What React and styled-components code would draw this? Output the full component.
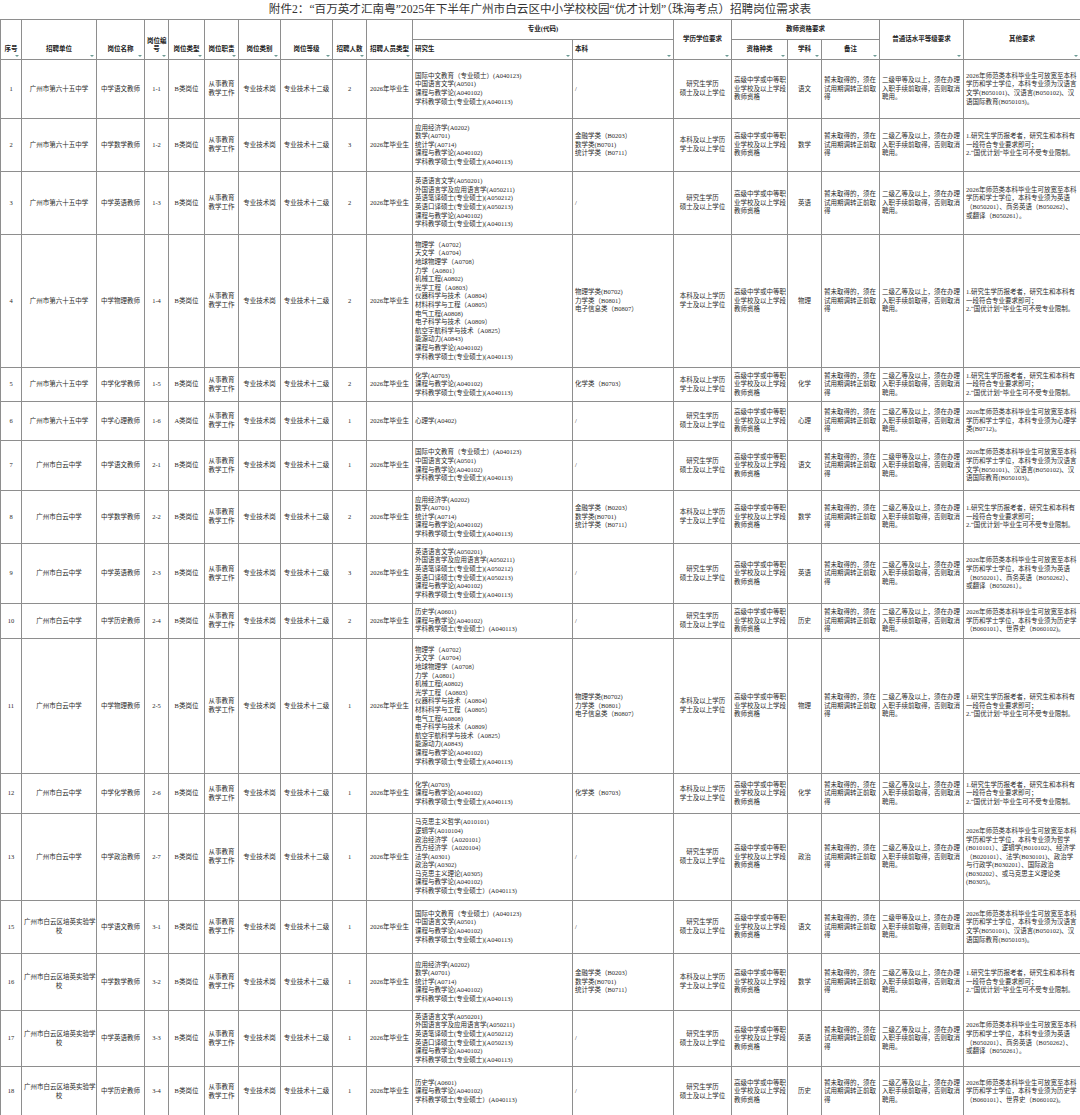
import React from 'react';
import styled, { createGlobalStyle, css } from 'styled-components';

const GlobalStyle = createGlobalStyle`
  html, body {
    margin: 0;
    padding: 0;
    background: #fff;
  }
  body {
    font-family: "Liberation Serif", "Noto Sans CJK SC", serif;
    color: #2a2a2a;
  }
`;

const Page = styled.div`
  width: 1080px;
  overflow: hidden;
`;

const Title = styled.div`
  height: 19px;
  line-height: 20px;
  text-align: center;
  font-size: 11.6px;
  color: #333;
  white-space: nowrap;
`;

const Sheet = styled.table`
  width: 1080px;
  table-layout: fixed;
  border-collapse: collapse;
  font-size: 6.5px;
  line-height: 8.6px;
`;

const HeadRow = styled.tr`
  height: 20px;
`;

const Head = styled.th`
  position: relative;
  border: 1px solid #8e8e8e;
  font-weight: bold;
  color: #222;
  padding: 0 2px;
  white-space: pre;
  overflow: hidden;
  text-align: ${p => (p.$left ? 'left' : 'center')};
  vertical-align: ${p => (p.$low ? 'bottom' : 'middle')};
  padding-bottom: ${p => (p.$low ? '5px' : '0')};
  ${p =>
    p.$filter &&
    css`
      &::after {
        content: '';
        position: absolute;
        right: 2px;
        bottom: 2px;
        width: 0;
        height: 0;
        border-left: 2px solid transparent;
        border-right: 2px solid transparent;
        border-top: 2px solid #6c9a94;
      }
    `}
`;

const Row = styled.tr`
  height: ${p => p.$h}px;
`;

const Cell = styled.td`
  border: 1px solid #8e8e8e;
  padding: 0 2px;
  white-space: pre;
  overflow: hidden;
  vertical-align: middle;
  text-align: ${p => (p.$left ? 'left' : 'center')};
`;

const COLS = [21, 75, 48, 24, 36, 34, 42, 52, 34, 46, 160, 101, 58, 56, 34, 58, 84, 117];

const GRAD = {
  语文: [
    '国际中文教育（专业硕士）(A040123)',
    '中国语言文学(A0501)',
    '课程与教学论(A040102)',
    '学科教学硕士(专业硕士)(A040113)',
  ],
  数学: [
    '应用经济学(A0202)',
    '数学(A0701)',
    '统计学(A0714)',
    '课程与教学论(A040102)',
    '学科教学硕士(专业硕士)(A040113)',
  ],
  英语: [
    '英语语言文学(A050201)',
    '外国语言学及应用语言学(A050211)',
    '英语笔译硕士(专业硕士)(A050212)',
    '英语口译硕士(专业硕士)(A050213)',
    '课程与教学论(A040102)',
    '学科教学硕士(专业硕士)(A040113)',
  ],
  物理: [
    '物理学（A0702）',
    '天文学（A0704）',
    '地球物理学（A0708）',
    '力学（A0801）',
    '机械工程(A0802)',
    '光学工程（A0803）',
    '仪器科学与技术（A0804）',
    '材料科学与工程（A0805）',
    '电气工程(A0808)',
    '电子科学与技术（A0809）',
    '航空宇航科学与技术（A0825）',
    '能源动力(A0843)',
    '课程与教学论(A040102)',
    '学科教学硕士(专业硕士)(A040113)',
  ],
  化学: ['化学(A0703)', '课程与教学论(A040102)', '学科教学硕士(专业硕士)(A040113)'],
  心理: ['心理学(A0402)'],
  历史: ['历史学(A0601)', '课程与教学论(A040102)', '学科教学硕士(专业硕士）(A040113)'],
  政治: [
    '马克思主义哲学(A010101)',
    '逻辑学(A010104)',
    '政治经济学（A020101）',
    '西方经济学（A020104）',
    '法学(A0301)',
    '政治学(A0302)',
    '马克思主义理论(A0305)',
    '课程与教学论(A040102)',
    '学科教学硕士(专业硕士）(A040113)',
  ],
};

const UNDER = {
  数学: ['金融学类（B0203）', '数学类(B0701)', '统计学类（B0711）'],
  物理: ['物理学类(B0702)', '力学类（B0801）', '电子信息类（B0807）'],
  化学: ['化学类（B0703）'],
};

const HEAD2026 = '2026年师范类本科毕业生可放宽至本科\n学历和学士学位，本科专业须为';
const TWO_STAGE = '1.研究生学历报考者，研究生和本科有\n一段符合专业要求即可；\n2.“国优计划”毕业生可不受专业限制。';

const OTHER = {
  语文: HEAD2026 + '汉语言\n文学(B050101)、汉语言(B050102)、汉\n语国际教育(B050103)。',
  数学: TWO_STAGE,
  英语: HEAD2026 + '英语\n（B050201）、商务英语（B050262）、\n或翻译（B050261）。',
  物理: TWO_STAGE,
  化学: TWO_STAGE,
  心理: HEAD2026 + '心理学\n类(B0712)。',
  历史: HEAD2026 + '历史学\n（B060101）、世界史（B060102)。',
  政治:
    HEAD2026 +
    '哲学\n(B010101）、逻辑学(B010102)、经济学\n（B020101）、法学(B030101)、政治学\n与行政学(B030201）、国际政治\n(B030202）、或马克思主义理论类\n(B0305)。',
};

const SCHOOL_A = '广州市第六十五中学';
const SCHOOL_B = '广州市白云中学';
const SCHOOL_C = '广州市白云区培英实验学\n校';

const ROWS = [
  { no: 1, school: SCHOOL_A, subj: '语文', code: '1-1', type: 'B', count: 2, grad: true, h: 59 },
  { no: 2, school: SCHOOL_A, subj: '数学', code: '1-2', type: 'B', count: 3, grad: false, h: 53 },
  { no: 3, school: SCHOOL_A, subj: '英语', code: '1-3', type: 'B', count: 2, grad: true, h: 63 },
  { no: 4, school: SCHOOL_A, subj: '物理', code: '1-4', type: 'B', count: 2, grad: false, h: 133 },
  { no: 5, school: SCHOOL_A, subj: '化学', code: '1-5', type: 'B', count: 2, grad: false, h: 34 },
  { no: 6, school: SCHOOL_A, subj: '心理', code: '1-6', type: 'A', count: 1, grad: true, h: 39 },
  { no: 7, school: SCHOOL_B, subj: '语文', code: '2-1', type: 'B', count: 1, grad: true, h: 50 },
  { no: 8, school: SCHOOL_B, subj: '数学', code: '2-2', type: 'B', count: 2, grad: false, h: 53 },
  { no: 9, school: SCHOOL_B, subj: '英语', code: '2-3', type: 'B', count: 3, grad: true, h: 60 },
  { no: 10, school: SCHOOL_B, subj: '历史', code: '2-4', type: 'B', count: 2, grad: true, h: 35 },
  { no: 11, school: SCHOOL_B, subj: '物理', code: '2-5', type: 'B', count: 1, grad: false, h: 135 },
  { no: 12, school: SCHOOL_B, subj: '化学', code: '2-6', type: 'B', count: 1, grad: false, h: 40 },
  { no: 13, school: SCHOOL_B, subj: '政治', code: '2-7', type: 'B', count: 1, grad: true, h: 87 },
  { no: 15, school: SCHOOL_C, subj: '语文', code: '3-1', type: 'B', count: 1, grad: true, h: 53 },
  { no: 16, school: SCHOOL_C, subj: '数学', code: '3-2', type: 'B', count: 1, grad: false, h: 57 },
  { no: 17, school: SCHOOL_C, subj: '英语', code: '3-3', type: 'B', count: 1, grad: true, h: 56 },
  { no: 18, school: SCHOOL_C, subj: '历史', code: '3-4', type: 'B', count: 1, grad: true, h: 50 },
];

function JobRow({ r }) {
  const degree = r.grad ? '研究生学历\n硕士及以上学位' : '本科及以上学历\n学士及以上学位';
  const level = r.subj === '语文' ? '甲等' : '乙等';
  return (
    <Row $h={r.h}>
      <Cell>{r.no}</Cell>
      <Cell>{r.school}</Cell>
      <Cell>{'中学' + r.subj + '教师'}</Cell>
      <Cell>{r.code}</Cell>
      <Cell>{r.type + '类岗位'}</Cell>
      <Cell>{'从事教育\n教学工作'}</Cell>
      <Cell>专业技术岗</Cell>
      <Cell>专业技术十二级</Cell>
      <Cell>{r.count}</Cell>
      <Cell>2026年毕业生</Cell>
      <Cell $left>{GRAD[r.subj].join('\n')}</Cell>
      <Cell $left>{UNDER[r.subj] ? UNDER[r.subj].join('\n') : '/'}</Cell>
      <Cell>{degree}</Cell>
      <Cell $left>{'高级中学或中等职\n业学校及以上学段\n教师资格'}</Cell>
      <Cell>{r.subj}</Cell>
      <Cell $left>{'暂未取得的，须在\n试用期调转正前取\n得'}</Cell>
      <Cell $left>{'二级' + level + '及以上，须在办理\n入职手续前取得，否则取消\n聘用。'}</Cell>
      <Cell $left>{OTHER[r.subj]}</Cell>
    </Row>
  );
}

export default function App() {
  return (
    <Page>
      <GlobalStyle />
      <Title>附件2：“百万英才汇南粤”2025年下半年广州市白云区中小学校校园“优才计划”（珠海考点）招聘岗位需求表</Title>
      <Sheet>
        <colgroup>
          {COLS.map((w, i) => (
            <col key={i} style={{ width: w }} />
          ))}
        </colgroup>
        <thead>
          <HeadRow>
            <Head rowSpan={2} $low $filter>序号</Head>
            <Head rowSpan={2} $low $filter>招聘单位</Head>
            <Head rowSpan={2} $low $filter>岗位名称</Head>
            <Head rowSpan={2} $low $filter>{'岗位编\n号'}</Head>
            <Head rowSpan={2} $low $filter>岗位类型</Head>
            <Head rowSpan={2} $low $filter>岗位职责</Head>
            <Head rowSpan={2} $low $filter>岗位类别</Head>
            <Head rowSpan={2} $low $filter>岗位等级</Head>
            <Head rowSpan={2} $low $filter>招聘人数</Head>
            <Head rowSpan={2} $low $filter>招聘人员类型</Head>
            <Head colSpan={2}>专业(代码)</Head>
            <Head rowSpan={2} $filter>学历学位要求</Head>
            <Head colSpan={3}>教师资格要求</Head>
            <Head rowSpan={2} $filter>普通话水平等级要求</Head>
            <Head rowSpan={2} $filter>其他要求</Head>
          </HeadRow>
          <HeadRow>
            <Head $left $filter>研究生</Head>
            <Head $left $filter>本科</Head>
            <Head $filter>资格种类</Head>
            <Head $filter>学科</Head>
            <Head $filter>备注</Head>
          </HeadRow>
        </thead>
        <tbody>
          {ROWS.map(r => (
            <JobRow key={r.no} r={r} />
          ))}
        </tbody>
      </Sheet>
    </Page>
  );
}
